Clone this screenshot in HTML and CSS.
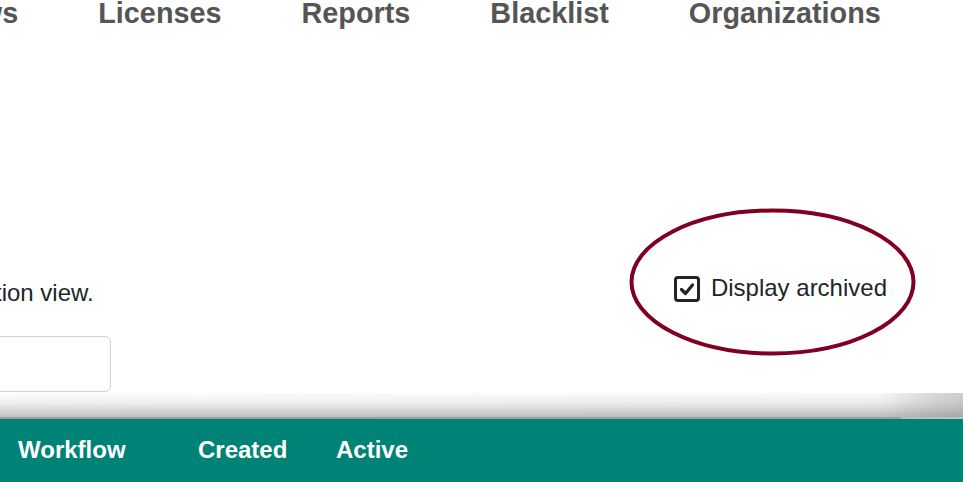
FILE: index.html
```html
<!DOCTYPE html>
<html lang="en">
<head>
<meta charset="utf-8">
<title>Applications</title>
<link rel="stylesheet" href="styles.css">
</head>
<body>
<nav class="topnav">
  <a class="nav-link">Reviews</a>
  <a class="nav-link">Licenses</a>
  <a class="nav-link">Reports</a>
  <a class="nav-link">Blacklist</a>
  <a class="nav-link">Organizations</a>
</nav>
<div class="filter-row">
  <p class="hint">tion view.</p>
  <label class="archived">
    <span class="checkbox">
      <svg viewBox="0 0 20 20" width="20" height="20"><path d="M4.5 10.5 L8.5 14.5 L15.5 6" fill="none" stroke="#212529" stroke-width="3.2" stroke-linecap="round" stroke-linejoin="round"/></svg>
    </span>
    <span class="label-text">Display archived</span>
  </label>
</div>
<div class="search-box"></div>
<div class="table-area">
  <div class="shade"></div>
  <div class="thead-line"></div>
  <div class="thead">
    <span class="th th-workflow">Workflow</span>
    <span class="th th-created">Created</span>
    <span class="th th-active">Active</span>
  </div>
</div>
<svg class="annotation" width="963" height="482" viewBox="0 0 963 482">
  <ellipse cx="772.5" cy="282" rx="141" ry="71.5" fill="none" stroke="#7f0020" stroke-width="4"/>
</svg>
</body>
</html>
```
FILE: styles.css
```css
html, body {
  margin: 0;
  padding: 0;
  background: #ffffff;
  overflow: hidden;
  width: 963px;
  height: 482px;
}
body {
  position: relative;
  font-family: "Liberation Sans", Arial, sans-serif;
  color: #212529;
}
.topnav {
  display: flex;
  gap: 80px;
  margin-left: -97px;
  margin-top: -1px;
  white-space: nowrap;
}
.nav-link {
  font-size: 28.8px;
  font-weight: 700;
  line-height: 1;
  color: #555555;
}
.filter-row {
  display: flex;
  justify-content: space-between;
  align-items: flex-start;
  margin-top: 242px;
  padding-right: 76px;
  font-size: 24px;
  line-height: 36px;
}
.hint {
  margin: 5px 0 0 -5px;
}
.archived {
  display: flex;
  align-items: center;
  gap: 11px;
}
.checkbox {
  box-sizing: border-box;
  width: 26px;
  height: 26px;
  border: 3px solid #212529;
  border-radius: 4px;
  display: flex;
  align-items: center;
  justify-content: center;
  margin-top: 2px;
}
.search-box {
  box-sizing: border-box;
  margin-top: 25px;
  margin-left: -200px;
  width: 311px;
  height: 56px;
  border: 1px solid #ced4da;
  border-radius: 6px;
}
.table-area {
  margin-top: 1px;
}
.shade {
  height: 24px;
  background:
    linear-gradient(to bottom, rgba(255,255,255,0) 0%, rgba(150,150,150,0.12) 40%, rgba(110,110,110,0.42) 100%),
    linear-gradient(to right, #fdfdfd 0px, #f8f8f8 880px, #e6e6e6 910px, #d6d6d6 940px, #cfcfcf 963px);
}
.thead-line {
  height: 2px;
  background: linear-gradient(to right, #a0a0a0 0px, #a0a0a0 900px, #bcbcbc 903px, #c2c2c2 963px);
}
.thead {
  display: flex;
  background: #008377;
  height: 70px;
  padding: 13px 0 0 18px;
  box-sizing: border-box;
  font-size: 24px;
  font-weight: 700;
  line-height: 36px;
  color: #ffffff;
}
.th-workflow { width: 180px; }
.th-created { width: 138px; }
.annotation {
  position: absolute;
  left: 0;
  top: 0;
  pointer-events: none;
}
```
